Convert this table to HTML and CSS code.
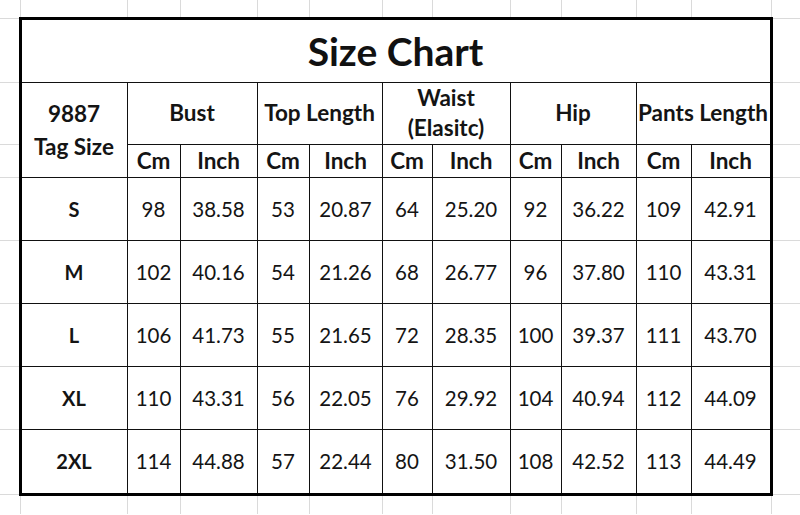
FILE: index.html
```html
<!DOCTYPE html>
<html lang="en">
<head>
<meta charset="utf-8">
<title>Size Chart</title>
<link rel="stylesheet" href="styles.css">
</head>
<body>
<table class="sheet">
  <colgroup>
    <col class="w20"><col class="w108"><col class="w53"><col class="w77"><col class="w52"><col class="w73"><col class="w50"><col class="w78"><col class="w51"><col class="w75"><col class="w55"><col class="w80"><col class="w28">
  </colgroup>
  <tr class="r-top">
    <td class="m"></td><td></td><td></td><td></td><td></td><td></td><td></td><td></td><td></td><td></td><td></td><td></td><td class="r"></td>
  </tr>
  <tr class="r-title">
    <td class="m"></td>
    <td class="c title et el er" colspan="11">Size Chart</td>
    <td class="r"></td>
  </tr>
  <tr class="r-head">
    <td class="m"></td>
    <td class="c h tag el" rowspan="2">9887<br>Tag Size</td>
    <td class="c h" colspan="2">Bust</td>
    <td class="c h" colspan="2">Top Length</td>
    <td class="c h waist" colspan="2">Waist<br>(Elasitc)</td>
    <td class="c h" colspan="2">Hip</td>
    <td class="c h er" colspan="2">Pants Length</td>
    <td class="r"></td>
  </tr>
  <tr class="r-sub">
    <td class="m"></td>
    <td class="c h">Cm</td><td class="c h">Inch</td>
    <td class="c h">Cm</td><td class="c h">Inch</td>
    <td class="c h">Cm</td><td class="c h">Inch</td>
    <td class="c h">Cm</td><td class="c h">Inch</td>
    <td class="c h">Cm</td><td class="c h er">Inch</td>
    <td class="r"></td>
  </tr>
  <tr class="r-data">
    <td class="m"></td>
    <td class="c sz el">S</td>
    <td class="c v">98</td><td class="c v">38.58</td>
    <td class="c v">53</td><td class="c v">20.87</td>
    <td class="c v">64</td><td class="c v">25.20</td>
    <td class="c v">92</td><td class="c v">36.22</td>
    <td class="c v">109</td><td class="c v er">42.91</td>
    <td class="r"></td>
  </tr>
  <tr class="r-data">
    <td class="m"></td>
    <td class="c sz el">M</td>
    <td class="c v">102</td><td class="c v">40.16</td>
    <td class="c v">54</td><td class="c v">21.26</td>
    <td class="c v">68</td><td class="c v">26.77</td>
    <td class="c v">96</td><td class="c v">37.80</td>
    <td class="c v">110</td><td class="c v er">43.31</td>
    <td class="r"></td>
  </tr>
  <tr class="r-data">
    <td class="m"></td>
    <td class="c sz el">L</td>
    <td class="c v">106</td><td class="c v">41.73</td>
    <td class="c v">55</td><td class="c v">21.65</td>
    <td class="c v">72</td><td class="c v">28.35</td>
    <td class="c v">100</td><td class="c v">39.37</td>
    <td class="c v">111</td><td class="c v er">43.70</td>
    <td class="r"></td>
  </tr>
  <tr class="r-data">
    <td class="m"></td>
    <td class="c sz el">XL</td>
    <td class="c v">110</td><td class="c v">43.31</td>
    <td class="c v">56</td><td class="c v">22.05</td>
    <td class="c v">76</td><td class="c v">29.92</td>
    <td class="c v">104</td><td class="c v">40.94</td>
    <td class="c v">112</td><td class="c v er">44.09</td>
    <td class="r"></td>
  </tr>
  <tr class="r-data r-last">
    <td class="m"></td>
    <td class="c sz el eb">2XL</td>
    <td class="c v eb">114</td><td class="c v eb">44.88</td>
    <td class="c v eb">57</td><td class="c v eb">22.44</td>
    <td class="c v eb">80</td><td class="c v eb">31.50</td>
    <td class="c v eb">108</td><td class="c v eb">42.52</td>
    <td class="c v eb">113</td><td class="c v er eb">44.49</td>
    <td class="r"></td>
  </tr>
  <tr class="r-bottom">
    <td class="m"></td><td></td><td></td><td></td><td></td><td></td><td></td><td></td><td></td><td></td><td></td><td></td><td class="r"></td>
  </tr>
</table>
</body>
</html>
```

FILE: styles.css
```css
html, body {
  margin: 0;
  padding: 0;
  background: #ffffff;
}

body {
  width: 800px;
  height: 515px;
  overflow: hidden;
  font-family: Lato, "Open Sans", sans-serif;
  color: #141414;
}

.sheet {
  border-collapse: collapse;
  table-layout: fixed;
  width: 800px;
}

.w20 { width: 20px; }
.w108 { width: 107px; }
.w53 { width: 53px; }
.w77 { width: 77px; }
.w52 { width: 52px; }
.w73 { width: 73px; }
.w50 { width: 50px; }
.w78 { width: 78px; }
.w51 { width: 51px; }
.w75 { width: 75px; }
.w55 { width: 55px; }
.w80 { width: 80px; }
.w28 { width: 29px; }

.sheet td {
  border: 1px solid #dadada;
  padding: 0;
  text-align: center;
  vertical-align: middle;
  white-space: nowrap;
  overflow: visible;
}

.sheet tr.r-top td { border-top: none; }
.sheet tr.r-bottom td { border-bottom: none; }
.sheet td.m { border-left: none; }
.sheet td.r { border-right: none; }

.r-top { height: 18px; }
.r-title { height: 64px; }
.r-head { height: 62px; }
.r-sub { height: 33px; }
.r-data { height: 63px; }
.sheet tr.r-last { height: 65px; }
.r-bottom { height: 20px; }

.sheet td.c {
  border: 1px solid #111111;
}

.sheet td.et { border-top: 3px solid #000000; }
.sheet td.el { border-left: 3px solid #000000; }
.sheet td.er { border-right: 3px solid #000000; }
.sheet td.eb { border-bottom: 3px solid #000000; }

.title {
  font-weight: 700;
  font-size: 39px;
  color: #111111;
}

.h {
  font-weight: 700;
  font-size: 22.5px;
  line-height: 30px;
}

.tag {
  line-height: 33px;
}

.waist {
  padding-top: 2px;
}

.sz {
  font-weight: 700;
  font-size: 20px;
}

.v {
  font-weight: 400;
  font-size: 20.5px;
}
```
